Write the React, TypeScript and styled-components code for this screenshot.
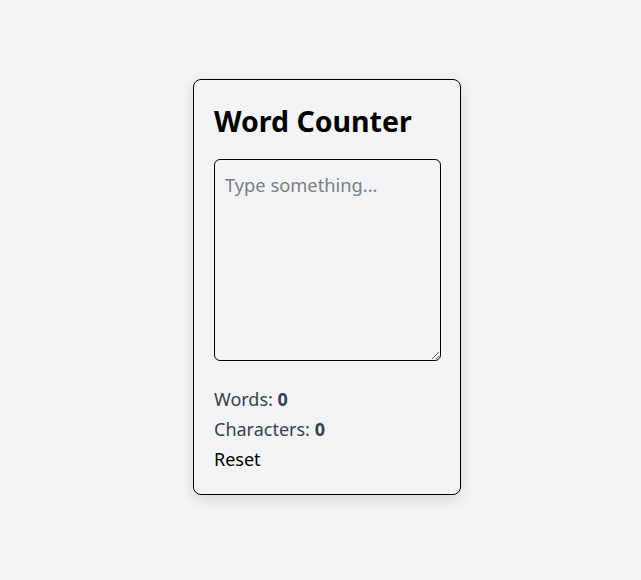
import React, { useState } from "react";
import styled, { createGlobalStyle } from "styled-components";

const Global = createGlobalStyle`
  html, body { margin: 0; padding: 0; background: #f3f4f6; }
  body { font-family: "Noto Sans", "Open Sans", sans-serif; }
`;

const Page = styled.div`
  min-height: 580px;
  box-sizing: border-box;
  display: flex;
  align-items: center;
  justify-content: center;
  padding: 0 0 6px 13px;
`;

const Card = styled.div`
  width: 268px;
  box-sizing: border-box;
  padding: 20px;
  border: 1px solid #000;
  border-radius: 8px;
  background: #f3f4f6;
  box-shadow: 0 4px 14px rgba(0, 0, 0, 0.12);
  display: flex;
  flex-direction: column;
`;

const Title = styled.h1`
  margin: 2px 0 18px;
  font-size: 28.5px;
  line-height: 39px;
  font-weight: 700;
  color: #000;
`;

const Area = styled.textarea`
  box-sizing: border-box;
  width: 227px;
  height: 202px;
  margin: 0 0 23px;
  padding: 12px 10px;
  border: 1px solid #000;
  border-radius: 6px;
  background: transparent;
  font-family: inherit;
  font-size: 18.3px;
  line-height: 26px;
  color: #111;
  outline: none;
  &::placeholder { color: #7b7f86; }
`;

const Stat = styled.div`
  font-size: 18px;
  line-height: 30px;
  color: #374151;
  b { font-weight: 700; }
`;

const ResetButton = styled.button`
  align-self: flex-start;
  background: none;
  border: none;
  padding: 0;
  font-family: inherit;
  font-size: 18px;
  line-height: 30px;
  color: #000;
  cursor: pointer;
`;

export default function App() {
  const [text, setText] = useState("");
  const words = text.trim() ? text.trim().split(/\s+/).length : 0;
  return (
    <>
      <Global />
      <Page>
        <Card>
          <Title>Word Counter</Title>
          <Area
            placeholder="Type something..."
            value={text}
            onChange={(e) => setText(e.target.value)}
          />
          <Stat>
            Words: <b>{words}</b>
          </Stat>
          <Stat>
            Characters: <b>{text.length}</b>
          </Stat>
          <ResetButton onClick={() => setText("")}>Reset</ResetButton>
        </Card>
      </Page>
    </>
  );
}
